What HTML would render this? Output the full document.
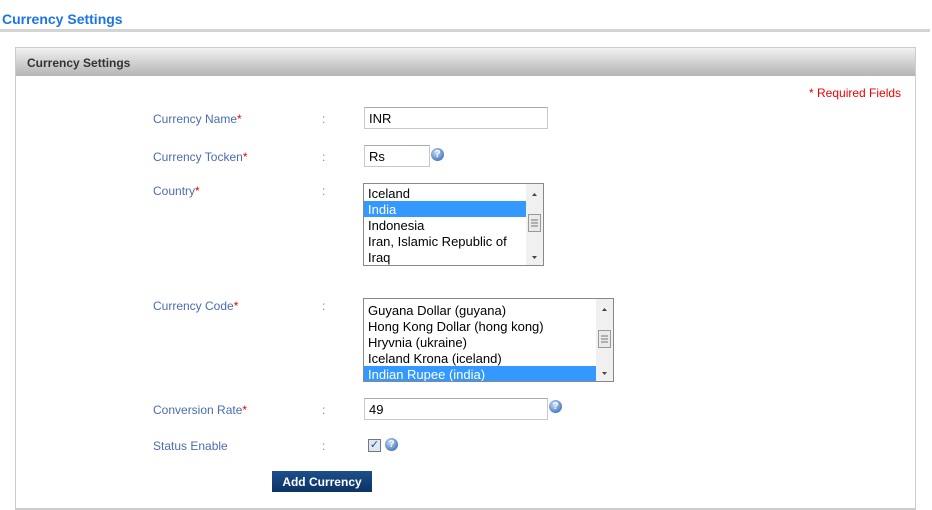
<!DOCTYPE html>
<html><head><style>
body{margin:0;width:932px;height:510px;background:#fff;font-family:"Liberation Sans",Arial,sans-serif;position:relative;overflow:hidden}
.a{position:absolute}
.lbl{position:absolute;left:153px;font-size:12px;color:#4a6db0}
.lbl b{color:#e00;font-weight:normal}
.col{position:absolute;left:322px;font-size:12px;color:#888}
.inp{position:absolute;border:1px solid #c8c8c8;border-top-color:#aaa;background:#fff;font-size:13px;padding-left:4px;box-sizing:border-box;line-height:21px;color:#000}
.help{position:absolute;width:13px;height:13px;border-radius:50%;background:radial-gradient(circle at 40% 35%,#c8dcf5,#4d7fc4 70%,#2f5f9f);color:#fff;font-size:10px;font-weight:bold;text-align:center;line-height:13px}
.list{position:absolute;border:1px solid #888;background:#fff;font-size:13px;box-sizing:border-box;overflow:hidden}
.list p{margin:0;height:16px;line-height:17px;padding-left:4px;white-space:nowrap}
.list .s{background:#3399ff;color:#fff}
.sb{position:absolute;right:0;top:0;bottom:0;width:17px;background:#f0f0f0}
</style></head><body>
<div class="a" style="left:2px;top:11px;font-size:14px;font-weight:bold;color:#1a75e8">Currency Settings</div>
<div class="a" style="left:0;top:29px;width:930px;height:3px;background:#d4d4d4"></div>
<div class="a" style="left:15px;top:47px;width:899px;height:460px;border:1px solid #ccc;border-bottom:2px solid #ccc"></div>
<div class="a" style="left:16px;top:48px;width:899px;height:28px;background:linear-gradient(#f2f2f2,#d8d8d8 40%,#b4b4b4)"></div>
<div class="a" style="left:27px;top:56px;font-size:12px;font-weight:bold;color:#333">Currency Settings</div>
<div class="a" style="left:809px;top:86px;font-size:12px;color:#e00">* Required Fields</div>

<div class="lbl" style="top:112px">Currency Name<b>*</b></div><div class="col" style="top:112px">:</div>
<div class="inp" style="left:364px;top:107px;width:184px;height:22px">INR</div>

<div class="lbl" style="top:150px">Currency Tocken<b>*</b></div><div class="col" style="top:150px">:</div>
<div class="inp" style="left:364px;top:145px;width:66px;height:22px">Rs</div>
<div class="help" style="left:431px;top:148px">?</div>

<div class="lbl" style="top:184px">Country<b>*</b></div><div class="col" style="top:184px">:</div>
<div class="list" style="left:363px;top:183px;width:181px;height:83px;padding-top:1px">
<p>Iceland</p><p class="s" style="margin-right:17px">India</p><p>Indonesia</p><p>Iran, Islamic Republic of</p><p>Iraq</p>
<div class="sb"><svg width="17" height="81" style="display:block">
<path d="M6 12h5l-2.5-3z" fill="#444"/>
<rect x="2.5" y="30.5" width="12" height="17" fill="#eaeaea" stroke="#999"/>
<path d="M5 36h7M5 39h7M5 42h7" stroke="#777"/>
<path d="M6 72h5l-2.5 3z" fill="#444"/></svg></div></div>

<div class="lbl" style="top:299px">Currency Code<b>*</b></div><div class="col" style="top:299px">:</div>
<div class="list" style="left:363px;top:298px;width:251px;height:84px;padding-top:3px">
<p>Guyana Dollar (guyana)</p><p>Hong Kong Dollar (hong kong)</p><p>Hryvnia (ukraine)</p><p>Iceland Krona (iceland)</p><p class="s" style="margin-right:17px">Indian Rupee (india)</p>
<div class="sb"><svg width="17" height="82" style="display:block">
<path d="M6 12h5l-2.5-3z" fill="#444"/>
<rect x="2.5" y="31.5" width="12" height="17" fill="#eaeaea" stroke="#999"/>
<path d="M5 37h7M5 40h7M5 43h7" stroke="#777"/>
<path d="M6 73h5l-2.5 3z" fill="#444"/></svg></div></div>

<div class="lbl" style="top:403px">Conversion Rate<b>*</b></div><div class="col" style="top:403px">:</div>
<div class="inp" style="left:364px;top:398px;width:184px;height:22px">49</div>
<div class="help" style="left:549px;top:400px">?</div>

<div class="lbl" style="top:439px">Status Enable</div><div class="col" style="top:439px">:</div>
<div class="a" style="left:368px;top:439px;width:13px;height:13px;border:1px solid #777;box-sizing:border-box;background:#dde6f3;font-size:11px;line-height:11px;text-align:center;color:#2a4a8a">✓</div>
<div class="help" style="left:385px;top:438px">?</div>

<div class="a" style="left:272px;top:471px;width:100px;height:21px;background:linear-gradient(#1d4f8c,#0b3366);color:#fff;font-size:12px;font-weight:bold;text-align:center;line-height:22px">Add Currency</div>
</body></html>
